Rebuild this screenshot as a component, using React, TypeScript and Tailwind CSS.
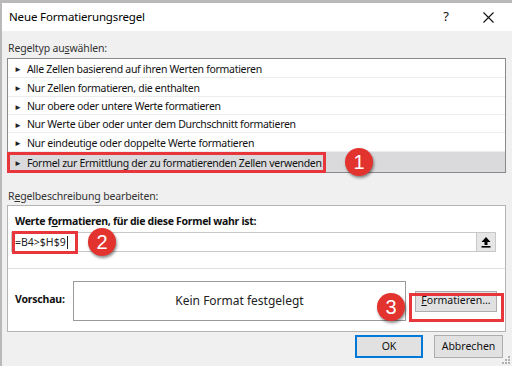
import React from "react";

const font = { fontFamily: '"Noto Sans", "Liberation Sans", sans-serif' };

function Row({ text, selected, h }: { text: string; selected?: boolean; h: string }) {
  return (
    <div
      className={`flex items-center pl-[6px] pt-[2px] ${h} ${selected ? "bg-[#dadadc]" : "bg-white border-b border-[#ececec]"}`}
    >
      <span className="text-[8px] text-[#222] mr-[5px] leading-none">►</span>
      <span className="text-[10.5px] tracking-[-0.3px] text-[#111] leading-none whitespace-nowrap">{text}</span>
    </div>
  );
}

function Badge({ n, x, y }: { n: string; x: number; y: number }) {
  return (
    <div
      className="absolute w-[28px] h-[28px] rounded-full bg-[#e2332f] flex items-center justify-center text-white text-[20px] shadow-[1px_2px_3px_rgba(0,0,0,0.45)]"
      style={{ left: x - 14, top: y - 14, fontFamily: '"Liberation Sans", Arial, sans-serif' }}
    >
      {n}
    </div>
  );
}

export default function App() {
  return (
    <div className="relative w-[512px] h-[366px] overflow-hidden bg-[#b9b9b9] pt-[3px] pl-[2px]" style={font}>
      <div className="h-full bg-[#f0f0f0] flex flex-col">
        {/* title bar */}
        <div className="h-[28px] bg-white flex items-center pl-[7px] shrink-0">
          <span className="text-[11.5px] tracking-[-0.15px] text-[#000]">Neue Formatierungsregel</span>
          <span className="ml-auto text-[13px] text-[#111] mr-[34px]">?</span>
          <svg width="11" height="11" viewBox="0 0 11 11" className="mr-[18px]">
            <path d="M0.5 0.5 L10.5 10.5 M10.5 0.5 L0.5 10.5" stroke="#111" strokeWidth="1.1" />
          </svg>
        </div>
        <div className="flex flex-col pl-[5px] pr-[6px]">
          <div className="mt-[10px] h-[16px] flex items-center pl-[1px] text-[10.5px] tracking-[-0.15px] text-[#333]">
            Regeltyp au<span className="underline">s</span>wählen:
          </div>
          <div className="mt-[1px] border border-[#8a8a8a] bg-white flex flex-col">
            <Row h="h-[19px]" text="Alle Zellen basierend auf ihren Werten formatieren" />
            <Row h="h-[19px]" text="Nur Zellen formatieren, die enthalten" />
            <Row h="h-[18px]" text="Nur obere oder untere Werte formatieren" />
            <Row h="h-[18px]" text="Nur Werte über oder unter dem Durchschnitt formatieren" />
            <Row h="h-[19px]" text="Nur eindeutige oder doppelte Werte formatieren" />
            <Row h="h-[20px]" text="Formel zur Ermittlung der zu formatierenden Zellen verwenden" selected />
          </div>
          <div className="mt-[16px] h-[16px] flex items-center pl-[1px] text-[10.5px] tracking-[-0.15px] text-[#333]">
            R<span className="underline">e</span>gelbeschreibung bearbeiten:
          </div>
          <div className="h-[127px] border border-[#b4b4b4] bg-white flex flex-col">
            <div className="mt-[8px] h-[16px] flex items-center pl-[7px] text-[10.5px] tracking-[-0.3px] font-bold text-[#111]">
              Werte f<span className="underline">o</span>rmatieren, für die diese Formel wahr ist:
            </div>
            <div className="mt-[2px] ml-[3px] mr-[9px] h-[20px] border border-[#c8c8c8] flex items-center">
              <span className="ml-[3px] text-[10.5px] text-[#222] leading-none">=B4&gt;$H$9</span>
              <span className="ml-[1px] w-px h-[13px] bg-[#222]" />
              <div className="ml-auto h-full w-[19px] bg-[#e6e6e6] border-l border-[#c8c8c8] flex items-center justify-center">
                <svg width="10" height="12" viewBox="0 0 10 12">
                  <path d="M5 1 L9.5 6 L6.5 6 L6.5 9 L3.5 9 L3.5 6 L0.5 6 Z" fill="#000" />
                  <rect x="0.5" y="10" width="9" height="1.6" fill="#000" />
                </svg>
              </div>
            </div>
            <div className="mt-[16px] border-t border-[#e0e0e0] flex-1 flex items-center">
              <span className="pl-[7px] w-[65px] text-[10.5px] tracking-[-0.2px] font-bold text-[#111]">Vorschau:</span>
              <div className="h-[40px] w-[333px] border border-[#9a9a9a] flex items-center justify-center text-[12px] text-[#222] mt-[1px]">
                Kein Format festgelegt
              </div>
              <div className="ml-[9px] h-[21px] w-[82px] bg-[#e1e1e1] border border-[#adadad] flex items-center justify-center text-[10.5px] text-[#111] mt-[2px]">
                <span className="underline">F</span>ormatieren...
              </div>
            </div>
          </div>
          <div className="mt-[3px] flex justify-end pr-[3px] gap-[11px]">
            <div className="h-[23px] w-[68px] bg-[#e1e1e1] border-2 border-[#0078d7] flex items-center justify-center text-[10.5px] text-[#111]">
              OK
            </div>
            <div className="h-[23px] w-[69px] bg-[#e1e1e1] border border-[#adadad] flex items-center justify-center text-[10.5px] text-[#111]">
              Abbrechen
            </div>
          </div>
        </div>
      </div>

      {/* resize grip */}
      <svg className="absolute right-[1px] bottom-[1px]" width="10" height="10" viewBox="0 0 10 10">
        {[
          [8, 2],
          [8, 5],
          [5, 5],
          [8, 8],
          [5, 8],
          [2, 8],
        ].map(([x, y], i) => (
          <rect key={i} x={x - 1} y={y - 1} width="2" height="2" fill="#b0b0b0" />
        ))}
      </svg>

      {/* annotations */}
      <div className="absolute left-[7px] top-[152px] w-[319px] h-[21px] border-[3px] border-[#e8373c]" />
      <div className="absolute left-[12px] top-[231px] w-[66px] h-[23px] border-[3px] border-[#e8373c]" />
      <div className="absolute left-[409px] top-[293px] w-[95px] h-[29px] border-[3px] border-[#e8373c]" />
      <Badge n="1" x={359} y={162} />
      <Badge n="2" x={102} y={242} />
      <Badge n="3" x={391} y={307} />
    </div>
  );
}
